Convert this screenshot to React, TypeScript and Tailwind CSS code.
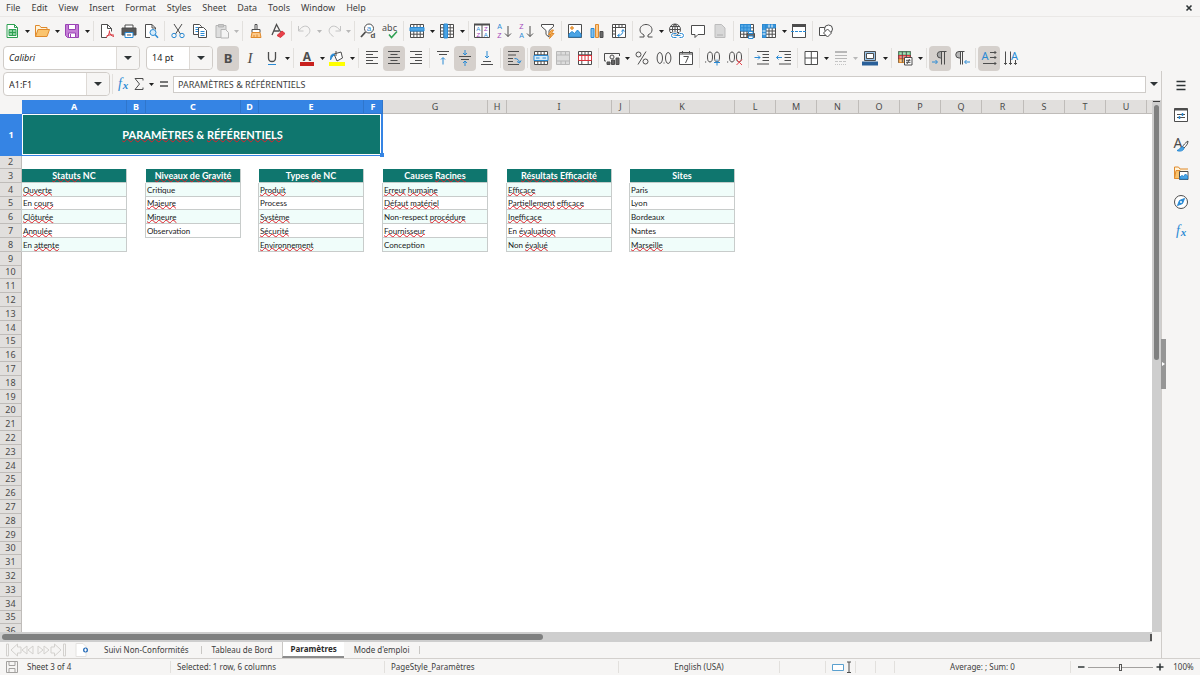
import type { ReactNode } from 'react'

type IconProps = { children: ReactNode }

const Icon = ({ children }: IconProps) => (
  <svg
    viewBox="0 0 16 16"
    className="h-4 w-4 shrink-0 overflow-visible"
    fill="none"
    stroke="#4d4d4d"
    strokeWidth="1"
    aria-hidden="true"
  >
    {children}
  </svg>
)

type GlyphProps = {
  x: number
  y: number
  size: number
  fill?: string
  serif?: boolean
  bold?: boolean
  italic?: boolean
  children: string
}

const Glyph = ({ x, y, size, fill = '#4d4d4d', serif, bold, italic, children }: GlyphProps) => {
  const sans = size < 9 ? 'Liberation Sans, sans-serif' : 'Noto Sans, sans-serif'
  return (
    <text
      x={x}
      y={y}
      fontSize={size}
      fill={fill}
      stroke="none"
      textAnchor="middle"
      fontFamily={serif ? 'Liberation Serif, serif' : sans}
      fontWeight={bold ? 700 : 400}
      fontStyle={italic ? 'italic' : 'normal'}
    >
      {children}
    </text>
  )
}

const BLUE = '#2a8ad4'
const PURPLE = '#a244b8'
const GRID = 'M1.5 1.5h13v13h-13z M1.5 4.8h13 M1.5 8h13 M1.5 11.2h13 M4.8 1.5v13 M8 1.5v13 M11.2 1.5v13'

const icons = {
  newDoc: (
    <Icon>
      <path d="M3 1.5h7.5l3 3v10H3z" fill="#fff" stroke="#2ea052" />
      <path d="M10.5 1.5v3h3" stroke="#2ea052" />
      <path d="M5 6.5h7v6H5z" fill="#8fd6a5" stroke="#2ea052" />
      <path d="M5 9.5h7M8.5 6.5v6" stroke="#2ea052" />
    </Icon>
  ),
  open: (
    <Icon>
      <path d="M1.5 13.5v-11h4l1.5 2h6v2" fill="#fff3d9" stroke="#e08a2c" />
      <path d="M1.5 13.5l2.5-7h11.5l-2.5 7z" fill="#fac46f" stroke="#e08a2c" />
    </Icon>
  ),
  save: (
    <Icon>
      <path d="M1.5 1.5h13v13h-11l-2-2z" fill="#c57fd6" stroke="#9a42b5" />
      <path d="M4.5 1.5h7v5h-7z" fill="#fff" stroke="#9a42b5" />
      <path d="M4.5 10h7v4.5h-7z" fill="#fff" stroke="#9a42b5" />
      <path d="M6.5 11v3" stroke="#9a42b5" />
    </Icon>
  ),
  pdf: (
    <Icon>
      <path d="M8 14.5H2.5v-13h6l4 4v3" fill="#fff" />
      <path d="M8.5 1.5v4h4" />
      <path d="M7 14.5c2-1 3.5-4 3.5-7M10.5 9c.5 2.5 2 4 4.5 4.5M7.5 13c2-1.2 5-1.5 7.5-.8" stroke="#d9343d" />
    </Icon>
  ),
  print: (
    <Icon>
      <path d="M4 5V2h8v3" fill="#fff" />
      <path d="M1 5h14v7H1z" fill="#595959" />
      <path d="M4 9.500h8v5H4z" fill="#fff" stroke={BLUE} />
      <path d="M6 12h4" />
    </Icon>
  ),
  preview: (
    <Icon>
      <path d="M7 14.5H2.5v-13H9L12.500 5v1.500" fill="#fff" />
      <path d="M9 1.5V5h3.5" />
      <circle cx="10" cy="9.5" r="3" fill="#d7ecfa" stroke={BLUE} />
      <path d="M12.2 11.7l2.8 3" stroke={BLUE} strokeWidth="1.5" />
    </Icon>
  ),
  cut: (
    <Icon>
      <path d="M4 1l6.5 10M12 1L5.5 11" />
      <circle cx="4" cy="12.5" r="2.2" stroke={BLUE} />
      <circle cx="12" cy="12.5" r="2.2" stroke={BLUE} />
    </Icon>
  ),
  copy: (
    <Icon>
      <path d="M1.5 1.5h6l2 2v8h-8z" fill="#fff" />
      <path d="M3.5 4.5h3M3.5 6.5h3M3.5 8.5h3" stroke={BLUE} />
      <path d="M6.5 4.5h5l3 3v7h-8z" fill="#fff" />
      <path d="M8.5 8.5h4M8.5 10.5h4M8.5 12.5h4" stroke={BLUE} />
    </Icon>
  ),
  paste: (
    <Icon>
      <path d="M2 2.5h10v12H2z" fill="#dedede" stroke="#b5b5b5" />
      <path d="M4.5 1.5h5V4h-5z" fill="#c8c8c8" stroke="#b5b5b5" />
      <path d="M7 6.5h4.5l3 3V15H7z" fill="#f4f4f4" stroke="#b5b5b5" />
    </Icon>
  ),
  clone: (
    <Icon>
      <path d="M7 1.5h2v5H7z" fill="#fff" />
      <path d="M4 6.5h8v3H4z" fill="#fff" />
      <path d="M4 9.5h8l1 5H3z" fill="#fcc98a" stroke="#e08a2c" />
      <path d="M6 12v2.5M9 11.5v3" stroke="#e08a2c" />
    </Icon>
  ),
  clear: (
    <Icon>
      <path d="M2 12L6.500 1.500L10.500 9M4 8h5" strokeWidth="1.3" />
      <path d="M7 12.5l5-4.500 3 2.500-4.500 4z" fill="#e8414a" stroke="#d9343d" />
    </Icon>
  ),
  undo: (
    <Icon>
      <path d="M1.5 3v5h5M2 7.5c3-5 8-5.500 10-2.500s.5 6-3.500 8.500" stroke="#c4c4c4" />
    </Icon>
  ),
  redo: (
    <Icon>
      <path d="M14.5 3v5h-5M14 7.5C11 2.500 6 2 4 5s-.5 6 3.500 8.500" stroke="#c4c4c4" />
    </Icon>
  ),
  find: (
    <Icon>
      <circle cx="9" cy="5.5" r="4.5" fill="#fff" />
      <path d="M5.5 9L1 14" strokeWidth="1.8" />
      <Glyph x={9} y={8} size={8} fill={BLUE}>a</Glyph>
      <Glyph x={13} y={15} size={8} bold>d</Glyph>
    </Icon>
  ),
  spelling: (
    <Icon>
      <Glyph x={7.5} y={8} size={9}>abc</Glyph>
      <path d="M7 11.5l2.500 3L15 8.5" stroke="#2ea052" strokeWidth="1.5" />
    </Icon>
  ),
  row: (
    <Icon>
      <path d={GRID} fill="#fff" />
      <path d="M1 4.5h14V8H1z" fill="#4ba4e4" stroke={BLUE} />
    </Icon>
  ),
  column: (
    <Icon>
      <path d={GRID} fill="#fff" />
      <path d="M5 1h3.500v14H5z" fill="#4ba4e4" stroke={BLUE} />
    </Icon>
  ),
  sort: (
    <Icon>
      <path d="M.5 1.5h15v13H.5zM8 2v12.500" fill="#fff" />
      <path d="M0 1.5h16" strokeWidth="2" />
      <Glyph x={4.3} y={7.5} size={6} fill={BLUE}>A</Glyph>
      <Glyph x={4.3} y={14.2} size={6} fill={PURPLE}>Z</Glyph>
      <Glyph x={11.8} y={7.5} size={6} fill={PURPLE}>Z</Glyph>
      <Glyph x={11.8} y={14.2} size={6} fill={BLUE}>A</Glyph>
    </Icon>
  ),
  sortAsc: (
    <Icon>
      <Glyph x={3.5} y={6} size={7} fill={BLUE}>A</Glyph>
      <Glyph x={3.5} y={15} size={7} fill={PURPLE}>Z</Glyph>
      <path d="M12 3v10.500M9 10.500l3 3 3-3" />
    </Icon>
  ),
  sortDesc: (
    <Icon>
      <Glyph x={3.5} y={6} size={7} fill={PURPLE}>Z</Glyph>
      <Glyph x={3.5} y={15} size={7} fill={BLUE}>A</Glyph>
      <path d="M12 3v10.500M9 10.500l3 3 3-3" />
    </Icon>
  ),
  filter: (
    <Icon>
      <path d="M1.5 1.5h12v2L9 7.5V14l-3-2.500v-4l-4.500-4z" fill="#fff" />
      <path d="M11.5 7l-3 4.500H11l-1.500 4 4.500-5h-2.500l2-3.500z" fill="#f7b25c" stroke="#e08a2c" />
    </Icon>
  ),
  image: (
    <Icon>
      <path d="M1.5 1.5h13v13h-13z" fill="#fff" />
      <path d="M2 14v-3l3-2.500 2.500 2 3-3.500L14 11v3z" fill="#4ba4e4" stroke={BLUE} />
      <circle cx="5" cy="5" r="1.3" fill="#f7b25c" stroke="#e08a2c" />
    </Icon>
  ),
  chart: (
    <Icon>
      <path d="M2 5.5h3v9H2z" fill="#7ebfee" stroke={BLUE} />
      <path d="M6.5 1.5h3v13h-3z" fill="#fcc98a" stroke="#e08a2c" />
      <path d="M11 8.5h3v6h-3z" fill="#6b6b6b" />
    </Icon>
  ),
  pivot: (
    <Icon>
      <path d="M1.5 1.5h13v13h-13z" fill="#fff" />
      <path d="M1.5 4.5h13M4.5 1.5v13M8 1.5v3M11 1.5v3M1.5 8h3M1.5 11h3" />
      <path d="M7 12.5c3.500 0 5-2 5-5.500M10.500 8.500l1.500-2 1.500 2M8.500 11l-2 1.500 2 1.500" stroke={BLUE} />
    </Icon>
  ),
  omega: (
    <Icon>
      <path d="M1.5 14H6v-2C3 10.500 2 8.800 2 6.800 2 3.800 4.500 1.500 8 1.500s6 2.300 6 5.300c0 2-1 3.700-4 5.200v2h4.500" />
    </Icon>
  ),
  link: (
    <Icon>
      <circle cx="7" cy="6.5" r="5.5" fill="#fff" />
      <path d="M1.5 6.5h11M7 1v11M2.500 3.500h9M2.500 9.500h9M7 1c-3.500 3-3.500 8 0 11M7 1c3.500 3 3.500 8 0 11" />
      <path d="M9 10.500H5.500a2 2 0 000 4H9M11 10.500h2.500a2 2 0 010 4H11" stroke="#fff" strokeWidth="2.500" />
      <path d="M8.500 10.500h-3a2 2 0 000 4h3M11.500 10.500h2a2 2 0 010 4h-2M7.500 12.500h5" stroke={BLUE} />
    </Icon>
  ),
  comment: (
    <Icon>
      <path d="M1.5 2.500h13v9H8l-3 3v-3H1.500z" fill="#fff" />
    </Icon>
  ),
  headerFooter: (
    <Icon>
      <path d="M3 1.5h6.500L13 5v9.500H3z" fill="#d8d8d8" stroke="#bcbcbc" />
      <path d="M5 11h6v2H5z" fill="#c4c4c4" stroke="none" />
    </Icon>
  ),
  printArea: (
    <Icon>
      <path d={GRID} fill="#fff" />
      <path d="M1.5 1.5h10V8h-10z" fill="#58aae6" stroke={BLUE} />
      <path d="M1.5 4.8h10M4.8 1.5V8M8 1.5V8" stroke={BLUE} />
      <path d="M8 10.500h7.500v4H8z" fill="#666" />
      <path d="M9.500 8.500H14v2H9.500zM9.500 13H14v2.500H9.500z" fill="#fff" stroke={BLUE} />
    </Icon>
  ),
  freeze: (
    <Icon>
      <path d={GRID} fill="#fff" />
      <path d="M1.5 1.5h3.300v13H1.500zM4.800 1.500h9.700v3.300H4.800z" fill="#3b97dc" stroke={BLUE} />
      <path d="M1.5 8h3M1.5 11h3M8 1.500v3M11 1.500v3" stroke="#fff" />
    </Icon>
  ),
  split: (
    <Icon>
      <path d="M1.5 1.5h13v13h-13z" fill="#fff" />
      <path d="M1 2.500h14" strokeWidth="3" />
      <path d="M0 8.500h16" stroke={BLUE} strokeDasharray="3 1" />
    </Icon>
  ),
  shapes: (
    <Icon>
      <path d="M1.5 4.500h8v8h-8z" fill="#fff" />
      <circle cx="10.5" cy="6" r="4" fill="#fff" />
      <path d="M9.500 6l4 4-4 4-4-4z" fill="#fff" />
    </Icon>
  ),
  bold: (
    <Icon>
      <Glyph x={8} y={12.5} size={13} bold>B</Glyph>
    </Icon>
  ),
  italic: (
    <Icon>
      <Glyph x={8} y={12.5} size={15} serif italic>I</Glyph>
    </Icon>
  ),
  underline: (
    <Icon>
      <path d="M4.500 2v6c0 2.500 1.300 3.500 3.500 3.500s3.500-1 3.500-3.500V2" strokeWidth="1.3" />
      <path d="M4 14.500h8" stroke={BLUE} />
    </Icon>
  ),
  fontColor: (
    <Icon>
      <Glyph x={8} y={10.5} size={12} bold>A</Glyph>
      <path d="M1 14h14" stroke="#c9211e" strokeWidth="4" />
    </Icon>
  ),
  highlight: (
    <Icon>
      <path d="M5 4l7-2 1.500 6L8 11z" fill="#fff" />
      <path d="M7 1v5" />
      <path d="M5 4C2 4 1.500 6 1.500 10L3 7l3-3" fill={BLUE} stroke={BLUE} />
      <path d="M0 14h16" stroke="#ffff00" strokeWidth="4" />
    </Icon>
  ),
  alignLeft: (
    <Icon>
      <path d="M2 1.500h12M2 4.500h7M2 7.500h12M2 10.500h7M2 13.500h12" />
    </Icon>
  ),
  alignCenter: (
    <Icon>
      <path d="M2 1.500h12M4.500 4.500h7M2 7.500h12M4.500 10.500h7M2 13.500h12" />
    </Icon>
  ),
  alignRight: (
    <Icon>
      <path d="M2 1.500h12M7 4.500h7M2 7.500h12M7 10.500h7M2 13.500h12" />
    </Icon>
  ),
  alignTop: (
    <Icon>
      <path d="M2 1.500h12M4 4.500h8" />
      <path d="M8 14.500V8M6 9.500l2-2 2 2" stroke={BLUE} />
    </Icon>
  ),
  alignMiddle: (
    <Icon>
      <path d="M2 6.500h12M4 9.500h8" />
      <path d="M8 0v4.500M6 3l2 2 2-2M8 16v-4.500M6 13l2-2 2 2" stroke={BLUE} />
    </Icon>
  ),
  alignBottom: (
    <Icon>
      <path d="M4 11.500h8M2 14.500h12" />
      <path d="M8 1v7M6 6l2 2 2-2" stroke={BLUE} />
    </Icon>
  ),
  wrap: (
    <Icon>
      <path d="M2 1.500h11M2 5h8M2 8.500h5M2 11.500h5M2 14.500h11" />
      <path d="M8.500 8.500c3 0 4.500 1.500 5 4M11 11.500l2.500 1.500 1.500-2.500" stroke={BLUE} />
    </Icon>
  ),
  merge: (
    <Icon>
      <path d="M1.5 1.500h13v13h-13zM1.500 4.800h13M1.500 11.200h13M4.800 1.500v13M8 1.500v13M11.200 1.500v13" fill="#fff" />
      <path d="M1 5.500h14v5H1z" fill="#d7ecfa" stroke={BLUE} />
      <path d="M3 8h3.500M13 8H9.500" stroke={BLUE} />
    </Icon>
  ),
  mergeCells: (
    <Icon>
      <path
        d="M1.500 1.500h13v13h-13zM1.500 5h13M1.500 11h13M6 1.500V5M10.500 1.500V5M6 11v3.500M10.500 11v3.500"
        fill="#dcdcdc"
        stroke="#b8b8b8"
      />
    </Icon>
  ),
  unmerge: (
    <Icon>
      <path d="M1.500 1.500h13v13h-13zM1.500 4.800h13M4.800 1.500v3.300M8 1.500v3.300M11.200 1.500v3.300M4.800 10.500v4M11.200 10.500v4" fill="#fff" />
      <path d="M1.500 5.500h13v5h-13zM4.800 5.500v5M8 5.500v5M11.200 5.500v5" stroke="#d9343d" />
    </Icon>
  ),
  currency: (
    <Icon>
      <path d="M2 11H.5V3.500h15V6" />
      <circle cx="8" cy="7" r="2" />
      <path d="M3 12h3v2.500H3zM7.500 10h3v4.500h-3zM12 8h3v6.500h-3z" fill="#666" />
    </Icon>
  ),
  percent: (
    <Icon>
      <circle cx="4.5" cy="4.500" r="2.5" />
      <circle cx="11.5" cy="11.500" r="2.5" />
      <path d="M12 1.500l-8 13" />
    </Icon>
  ),
  number: (
    <Icon>
      <ellipse cx="3.800" cy="8" rx="2.700" ry="5.500" />
      <ellipse cx="12.200" cy="8" rx="2.700" ry="5.500" />
      <path d="M7.500 13h1" />
    </Icon>
  ),
  date: (
    <Icon>
      <path d="M1.500 2.500h13v12h-13zM1.500 4h13M4.500 1v2.500M11.500 1v2.500" fill="#fff" />
      <path d="M5.500 6.500h5l-3 6.500" />
    </Icon>
  ),
  addDecimal: (
    <Icon>
      <ellipse cx="5" cy="7" rx="2.500" ry="5" />
      <ellipse cx="12" cy="7" rx="2.500" ry="5" />
      <path d="M0 12h1.200" />
      <path d="M12 9.500v6M9 12.500h6" stroke={BLUE} />
    </Icon>
  ),
  removeDecimal: (
    <Icon>
      <ellipse cx="5" cy="7" rx="2.500" ry="5" />
      <ellipse cx="12" cy="7" rx="2.500" ry="5" />
      <path d="M0 12h1.200" />
      <path d="M9.500 9.500L15 15M15 9.500L9.500 15" stroke="#e8414a" />
    </Icon>
  ),
  indent: (
    <Icon>
      <path d="M3 1.500h12M8.500 4.500H15M8.500 7.500H15M8.500 10.500H15M3 14h12" />
      <path d="M.5 7.500H6M4 5.500l2 2-2 2" stroke={BLUE} />
    </Icon>
  ),
  outdent: (
    <Icon>
      <path d="M3 1.500h12M8.500 4.500H15M8.500 7.500H15M8.500 10.500H15M3 14h12" />
      <path d="M.5 7.500H6M2.500 5.500l-2 2 2 2" stroke={BLUE} />
    </Icon>
  ),
  borders: (
    <Icon>
      <path d="M2 1.500h12.500v13H2zM8.300 1.500v13M2 8h12.500" fill="#fff" />
    </Icon>
  ),
  borderStyle: (
    <Icon>
      <path d="M2 2h12" strokeWidth="2" stroke="#b8b8b8" />
      <path d="M2 5.500h12M2 8.500h12" stroke="#b8b8b8" />
      <path d="M2 11.500h12" stroke="#c4c4c4" strokeDasharray="3 1" />
      <path d="M2 14.500h12" stroke="#c4c4c4" strokeDasharray="1 1" />
    </Icon>
  ),
  borderColor: (
    <Icon>
      <path d="M2.500 1.500h11v9h-11z" fill="#9dc6ea" />
      <path d="M4.500 3.500h7v5h-7z" fill="#fff" />
      <path d="M0 13.500h16" stroke="#2a6099" strokeWidth="4" />
    </Icon>
  ),
  conditional: (
    <Icon>
      <path d="M1.500 1.500h12v11h-12z" fill="#fff" />
      <path d="M2 2h11v3H2z" fill="#a9dfba" stroke="#5cb578" />
      <path d="M2 5.500h11v3H2z" fill="#f28b82" stroke="#d9343d" />
      <path d="M2 9h5v3.500H2z" fill="#fcc98a" stroke="#e08a2c" />
      <path d="M5.300 1.500v11M9.300 1.500v6" />
      <path d="M7.500 7.500H15V15H7.500z" fill="#fff" />
      <path d="M9 10.300h4.500M9 12.300h4.500M12.500 9L10 14" />
    </Icon>
  ),
  ltr: (
    <Icon>
      <path d="M9.500 1.500h-1a3 3 0 000 6.500h1z" fill="#a8a8a8" />
      <path d="M8.500 1.500h6M9.500 8v6.500M12.500 1.500v13" />
      <path d="M0 12h5M3.500 10l2 2-2 2" stroke={BLUE} />
    </Icon>
  ),
  rtl: (
    <Icon>
      <path d="M6.500 1.500H5A3 3 0 005 8h1.500z" fill="#b8b8b8" />
      <path d="M5 1.500h5.500M6.500 8v6.500M8.500 1.500v13" />
      <path d="M16 12h-5M12.500 10l-2 2 2 2" stroke={BLUE} />
    </Icon>
  ),
  textLtr: (
    <Icon>
      <Glyph x={4} y={9.5} size={11} fill={BLUE}>A</Glyph>
      <path d="M9 2.500h6M9 7.500h6M2 13.500h13M13.500 1L15 2.500 13.500 4M13.500 6L15 7.500 13.500 9M13.500 12l1.500 1.500-1.500 1.500" />
    </Icon>
  ),
  textTtb: (
    <Icon>
      <Glyph x={11.5} y={9.5} size={11} fill={BLUE}>A</Glyph>
      <path d="M2.500 1.500v13M7.500 1.500v13M12.500 10v4.500M1 13l1.500 1.500L4 13M6 13l1.500 1.500L9 13M11 13l1.500 1.500L14 13" />
    </Icon>
  ),
  functionWizard: (
    <Icon>
      <Glyph x={5} y={11.5} size={14} fill={BLUE} serif italic>f</Glyph>
      <Glyph x={10.5} y={13} size={11} fill={BLUE} serif italic bold>x</Glyph>
    </Icon>
  ),
  sum: (
    <Icon>
      <path d="M12 4.500V2.500H4L8.500 8 4 13.500h8v-2" />
    </Icon>
  ),
  equals: (
    <Icon>
      <path d="M4 6h8M4 10h8" strokeWidth="1.5" />
    </Icon>
  ),
  menu: (
    <Icon>
      <path d="M3.500 3.500h9M3.500 7.500h9M3.500 11.500h9" stroke="#2e3436" strokeWidth="1.3" />
    </Icon>
  ),
  properties: (
    <Icon>
      <path d="M1.500 1.500h13v13h-13z" fill="#fff" />
      <path d="M1.500 2.500h13" strokeWidth="2" />
      <path d="M4 7.500h8M4 10.500h8" />
      <path d="M9.500 6v3M6.500 9v3" stroke={BLUE} strokeWidth="1.5" />
    </Icon>
  ),
  styles: (
    <Icon>
      <Glyph x={5} y={11.5} size={14}>A</Glyph>
      <path d="M15 5c-3 2-4.500 4-5.500 6L11 12c2-2 4-4 4-7z" fill="#fff" />
      <path d="M9.500 11c-3 0-2.500 3-5.500 3.500 3 1.500 7 0 7-2.500z" fill="#4ba4e4" stroke={BLUE} />
    </Icon>
  ),
  gallery: (
    <Icon>
      <path d="M1.500 13.500V2h4L7 4h8" fill="#fff3d9" stroke="#e08a2c" />
      <path d="M1.500 13.500l1.500-8h4v8z" fill="#fac46f" stroke="#e08a2c" />
      <path d="M6.500 6.500H15v8H6.500z" fill="#fff" />
      <path d="M7 14v-2l2-1.500 1.500 1L12.500 9l2 2v3z" fill="#4ba4e4" stroke={BLUE} />
    </Icon>
  ),
  navigator: (
    <Icon>
      <circle cx="8" cy="8" r="6.500" fill="#fff" />
      <path d="M11.500 4.500l-5 2-2 5 5-2z" fill={BLUE} stroke={BLUE} />
      <circle cx="8" cy="8" r="1" fill="#fff" stroke="none" />
    </Icon>
  ),
}

type IconName = keyof typeof icons

type Tool = {
  icon: IconName
  label: string
  caret?: boolean
  active?: boolean
  disabled?: boolean
}

type ToolGroup = Tool[]

const standardTools: ToolGroup[] = [
  [
    { icon: 'newDoc', label: 'New', caret: true },
    { icon: 'open', label: 'Open', caret: true },
    { icon: 'save', label: 'Save', caret: true },
  ],
  [
    { icon: 'pdf', label: 'Export as PDF' },
    { icon: 'print', label: 'Print' },
    { icon: 'preview', label: 'Print Preview' },
  ],
  [
    { icon: 'cut', label: 'Cut' },
    { icon: 'copy', label: 'Copy' },
    { icon: 'paste', label: 'Paste', caret: true, disabled: true },
  ],
  [
    { icon: 'clone', label: 'Clone Formatting' },
    { icon: 'clear', label: 'Clear Direct Formatting' },
  ],
  [
    { icon: 'undo', label: 'Undo', caret: true, disabled: true },
    { icon: 'redo', label: 'Redo', caret: true, disabled: true },
  ],
  [
    { icon: 'find', label: 'Find and Replace' },
    { icon: 'spelling', label: 'Spelling' },
  ],
  [
    { icon: 'row', label: 'Row', caret: true },
    { icon: 'column', label: 'Column', caret: true },
  ],
  [
    { icon: 'sort', label: 'Sort' },
    { icon: 'sortAsc', label: 'Sort Ascending' },
    { icon: 'sortDesc', label: 'Sort Descending' },
    { icon: 'filter', label: 'AutoFilter' },
  ],
  [
    { icon: 'image', label: 'Insert Image' },
    { icon: 'chart', label: 'Insert Chart' },
    { icon: 'pivot', label: 'Pivot Table' },
  ],
  [
    { icon: 'omega', label: 'Special Character', caret: true },
    { icon: 'link', label: 'Hyperlink' },
    { icon: 'comment', label: 'Comment' },
    { icon: 'headerFooter', label: 'Headers and Footers', disabled: true },
  ],
  [
    { icon: 'printArea', label: 'Define Print Area' },
    { icon: 'freeze', label: 'Freeze Rows and Columns', caret: true },
    { icon: 'split', label: 'Split Window' },
  ],
  [{ icon: 'shapes', label: 'Draw Functions' }],
]

const formatTools: ToolGroup[] = [
  [
    { icon: 'bold', label: 'Bold', active: true },
    { icon: 'italic', label: 'Italic' },
    { icon: 'underline', label: 'Underline', caret: true },
  ],
  [
    { icon: 'fontColor', label: 'Font Color', caret: true },
    { icon: 'highlight', label: 'Background Color', caret: true },
  ],
  [
    { icon: 'alignLeft', label: 'Align Left' },
    { icon: 'alignCenter', label: 'Center Horizontally', active: true },
    { icon: 'alignRight', label: 'Align Right' },
  ],
  [
    { icon: 'alignTop', label: 'Align Top' },
    { icon: 'alignMiddle', label: 'Center Vertically', active: true },
    { icon: 'alignBottom', label: 'Align Bottom' },
  ],
  [{ icon: 'wrap', label: 'Wrap Text', active: true }],
  [
    { icon: 'merge', label: 'Merge and Center Cells', active: true },
    { icon: 'mergeCells', label: 'Merge Cells', disabled: true },
    { icon: 'unmerge', label: 'Unmerge Cells' },
  ],
  [
    { icon: 'currency', label: 'Format as Currency', caret: true },
    { icon: 'percent', label: 'Format as Percent' },
    { icon: 'number', label: 'Format as Number' },
    { icon: 'date', label: 'Format as Date' },
  ],
  [
    { icon: 'addDecimal', label: 'Add Decimal Place' },
    { icon: 'removeDecimal', label: 'Delete Decimal Place' },
  ],
  [
    { icon: 'indent', label: 'Increase Indent' },
    { icon: 'outdent', label: 'Decrease Indent' },
  ],
  [
    { icon: 'borders', label: 'Borders', caret: true },
    { icon: 'borderStyle', label: 'Border Style', caret: true, disabled: true },
    { icon: 'borderColor', label: 'Border Color', caret: true },
  ],
  [{ icon: 'conditional', label: 'Conditional', caret: true }],
  [
    { icon: 'ltr', label: 'Left-To-Right', active: true },
    { icon: 'rtl', label: 'Right-To-Left' },
  ],
  [
    { icon: 'textLtr', label: 'Text from left to right', active: true },
    { icon: 'textTtb', label: 'Text from top to bottom' },
  ],
]

const sidebarTools: Tool[] = [
  { icon: 'menu', label: 'Sidebar Settings' },
  { icon: 'properties', label: 'Properties' },
  { icon: 'styles', label: 'Styles' },
  { icon: 'gallery', label: 'Gallery' },
  { icon: 'navigator', label: 'Navigator' },
  { icon: 'functionWizard', label: 'Functions' },
]

const menus = ['File', 'Edit', 'View', 'Insert', 'Format', 'Styles', 'Sheet', 'Data', 'Tools', 'Window', 'Help']

const columns = [
  { name: 'A', width: 105 },
  { name: 'B', width: 19 },
  { name: 'C', width: 95 },
  { name: 'D', width: 18 },
  { name: 'E', width: 105 },
  { name: 'F', width: 19 },
  { name: 'G', width: 105 },
  { name: 'H', width: 19 },
  { name: 'I', width: 105 },
  { name: 'J', width: 18 },
  { name: 'K', width: 105 },
  { name: 'L', width: 41 },
  { name: 'M', width: 41 },
  { name: 'N', width: 42 },
  { name: 'O', width: 41 },
  { name: 'P', width: 41 },
  { name: 'Q', width: 41 },
  { name: 'R', width: 42 },
  { name: 'S', width: 41 },
  { name: 'T', width: 41 },
  { name: 'U', width: 41 },
]

// Words between underscores are flagged by the spell checker.
const lists: Record<string, string[]> = {
  A: ['_Statuts_ NC', '_Ouverte_', 'En _cours_', '_Clôturée_', '_Annulée_', 'En _attente_'],
  C: ['_Niveaux_ _de_ _Gravité_', 'Critique', '_Majeure_', '_Mineure_', 'Observation'],
  E: ['Types _de_ NC', '_Produit_', 'Process', '_Système_', '_Sécurité_', '_Environnement_'],
  G: ['Causes _Racines_', '_Erreur_ _humaine_', '_Défaut_ _matériel_', 'Non-respect _procédure_', '_Fournisseur_', 'Conception'],
  I: ['_Résultats_ _Efficacité_', '_Efficace_', '_Partiellement_ _efficace_', '_Inefficace_', 'En _évaluation_', 'Non _évalué_'],
  K: ['Sites', 'Paris', 'Lyon', 'Bordeaux', 'Nantes', '_Marseille_'],
}

const FIRST_LIST_ROW = 3
const rows = Array.from({ length: 35 }, (_, i) => i + 2)

const Caret = ({ disabled }: { disabled?: boolean }) => (
  <svg viewBox="0 0 5 3" className="h-[3px] w-[5px]" aria-hidden="true">
    <path d="M0 0h5L2.500 3z" fill={disabled ? '#b8b8b8' : '#1f1f1f'} />
  </svg>
)

const BigCaret = () => (
  <svg viewBox="0 0 8 4" className="h-1 w-2" aria-hidden="true">
    <path d="M0 0h8L4 4z" fill="#2e3436" />
  </svg>
)

const Separator = () => <span className="mx-[2px] h-5 w-px shrink-0 bg-[#e2e0dd]" />

const ToolButton = ({ icon, label, caret, active, disabled }: Tool) => (
  <div className="flex shrink-0 items-center">
    <button
      type="button"
      title={label}
      aria-label={label}
      disabled={disabled}
      className={`flex h-[25px] w-[22px] items-center justify-center rounded ${active ? 'bg-[#d5d0cc]' : ''}`}
    >
      {icons[icon]}
    </button>
    {caret ? (
      <button
        type="button"
        aria-label={`${label} options`}
        disabled={disabled}
        className={`flex h-[25px] items-center justify-center ${disabled ? 'w-[7px]' : 'w-2'}`}
      >
        <Caret disabled={disabled} />
      </button>
    ) : null}
  </div>
)

const ToolGroups = ({ groups }: { groups: ToolGroup[] }) => (
  <>
    {groups.map((group, i) => (
      <div key={group[0].icon} className="flex items-center">
        {i > 0 ? <Separator /> : null}
        {group.map((tool) => (
          <ToolButton key={tool.icon} {...tool} />
        ))}
      </div>
    ))}
  </>
)

type DropdownProps = {
  label: string
  value: string
  className: string
  textClassName?: string
}

const Dropdown = ({ label, value, className, textClassName = '' }: DropdownProps) => (
  <div className={`relative flex h-6 items-center rounded border border-[#d0ccc8] bg-white ${className}`}>
    <select
      aria-label={label}
      defaultValue={value}
      className={`h-full w-full appearance-none bg-transparent pl-[5px] text-[#1f1f1f] outline-none ${textClassName}`}
    >
      <option>{value}</option>
    </select>
    <span className="pointer-events-none absolute inset-y-0 right-0 flex w-[23px] items-center justify-center rounded-r border-l border-[#dedad6] bg-[#f6f5f4]">
      <BigCaret />
    </span>
  </div>
)

const SpellText = ({ text }: { text: string }) => (
  <>
    {text.split('_').map((part, i) =>
      i % 2 === 1 && part.trim() ? (
        <span
          key={i}
          className="underline decoration-[#e0202a] decoration-wavy decoration-1 underline-offset-[-1px] [text-decoration-skip-ink:none]"
        >
          {part}
        </span>
      ) : (
        part
      ),
    )}
  </>
)

const SheetCell = ({ column, row }: { column: string; row: number }) => {
  const index = row - FIRST_LIST_ROW
  const text = lists[column]?.[index]
  if (!text) return <td className="p-0" />
  if (index === 0) {
    return (
      <td className="border-r border-b border-[#c3ccca] bg-[#0f766e] p-0 text-center text-[9px] font-bold whitespace-nowrap text-white">
        <SpellText text={text} />
      </td>
    )
  }
  return (
    <td
      className={`border-r border-b border-[#c8cccb] p-0 pl-px whitespace-nowrap shadow-[-1px_0_0_#c8cccb] ${index % 2 === 1 ? 'bg-[#f0fdfa]' : 'bg-white'}`}
    >
      <SpellText text={text} />
    </td>
  )
}

const Sheet = () => (
  <table className="w-full table-fixed border-separate border-spacing-0 font-['Lato',sans-serif] text-[8px] leading-[12px] text-[#1a1a1a]">
    <colgroup>
      <col style={{ width: 22 }} />
      {columns.map((column) => (
        <col key={column.name} style={{ width: column.width }} />
      ))}
      <col />
    </colgroup>
    <thead className="font-['Noto_Sans',sans-serif] text-[9px] text-[#4a4a4a]">
      <tr className="h-[14px]">
        <th className="bg-[#f6f5f4] p-0" />
        {columns.map((column, i) => (
          <th
            key={column.name}
            scope="col"
            className={`border-r border-b p-0 ${
              i < 6
                ? 'border-[#2f76cc] bg-[#3584e4] font-bold text-white'
                : 'border-[#bfbcb9] bg-[#e1dfdd] font-normal'
            }`}
          >
            {column.name}
          </th>
        ))}
        <th className="border-b border-[#bfbcb9] bg-[#e1dfdd] p-0" />
      </tr>
    </thead>
    <tbody>
      <tr className="h-[42px]">
        <th scope="row" className="bg-[#3584e4] p-0 font-['Noto_Sans',sans-serif] text-[9px] text-white">
          1
        </th>
        <td colSpan={6} className="relative bg-[#0f766e] p-0 text-center text-[11px] font-bold text-white">
          <SpellText text="_PARAMÈTRES_ & _RÉFÉRENTIELS_" />
          <span className="absolute inset-0 border-r-2 border-b border-[#3584e4]">
            <span className="absolute inset-0 border border-white" />
          </span>
          <span className="absolute -right-px -bottom-px h-1 w-1 bg-[#3584e4]" />
        </td>
      </tr>
      {rows.map((row) => (
        <tr key={row} className={row === 2 || row % 5 === 0 ? 'h-[13px]' : 'h-[14px]'}>
          <th
            scope="row"
            className="border-r border-b border-[#bfbcb9] bg-[#e1dfdd] p-0 font-['Noto_Sans',sans-serif] text-[9px] font-normal text-[#4a4a4a]"
          >
            {row}
          </th>
          {columns.map((column) => (
            <SheetCell key={column.name} column={column.name} row={row} />
          ))}
          <td className="p-0" />
        </tr>
      ))}
    </tbody>
  </table>
)

const FormulaBar = () => (
  <div className="flex h-[29px] shrink-0 items-start pt-px pl-[3px]">
    <div className="flex h-6 w-[107px] shrink-0 items-center rounded border border-[#d0ccc8] bg-white">
      <input
        aria-label="Name Box"
        defaultValue="A1:F1"
        className="h-full min-w-0 flex-1 pl-[5px] text-[#1f1f1f] outline-none"
      />
      <button
        type="button"
        aria-label="Named ranges"
        className="flex h-full w-[23px] items-center justify-center rounded-r border-l border-[#dedad6] bg-[#f6f5f4]"
      >
        <BigCaret />
      </button>
    </div>
    <div className="flex h-6 items-center">
      <Separator />
      <button type="button" aria-label="Function Wizard" className="flex w-4 justify-center">
        {icons.functionWizard}
      </button>
      <button type="button" aria-label="Select Function" className="flex w-4 justify-center">
        {icons.sum}
      </button>
      <button type="button" aria-label="Select Function options" className="flex w-2 justify-center">
        <Caret />
      </button>
      <button type="button" aria-label="Formula" className="flex w-[18px] justify-center">
        {icons.equals}
      </button>
    </div>
    <input
      aria-label="Formula input"
      defaultValue="PARAMÈTRES & RÉFÉRENTIELS"
      className="mt-1 h-[17px] min-w-0 flex-1 border border-[#cfccc9] bg-white pl-1 outline-none"
    />
    <button type="button" aria-label="Expand Formula Bar" className="flex h-6 w-[15px] items-center justify-center">
      <BigCaret />
    </button>
  </div>
)

const SheetTabs = () => (
  <nav className="flex h-4 shrink-0 items-center text-[8px]" aria-label="Sheets">
    <svg viewBox="0 0 62 14" className="ml-[5px] h-[14px] w-[62px]" fill="none" stroke="#d3d1ce" aria-hidden="true">
      <path d="M1.5 1v12h2V1zM12.500 1L6 7l6.500 6v-3H16V4h-3.500z" />
      <path d="M22 3l-5 4 5 4zM28 3l-5 4 5 4zM33 3l5 4-5 4zM39 3l5 4-5 4z" />
      <path d="M49.500 1L56 7l-6.500 6v-3H46V4h3.500zM58.500 1v12h2V1z" />
    </svg>
    <button type="button" aria-label="Add Sheet" className="ml-[7px] flex w-[15px] justify-center">
      <svg viewBox="0 0 14 14" className="h-[14px] w-[14px]" fill="none" aria-hidden="true">
        <path d="M1 .5h7l3 3v10H1z" fill="#fff" stroke="#e4e2e0" />
        <circle cx="10.5" cy="7" r="2.500" fill="#2a6fba" />
        <path d="M9 7h3M10.500 5.500v3" stroke="#fff" />
      </svg>
    </button>
    <div className="ml-[3px] flex h-full items-center">
      <button type="button" className="h-full px-3">Suivi Non-Conformités</button>
      <span className="h-2 w-px bg-[#c9c7c4]" />
      <button type="button" className="h-full px-[10px]">Tableau de Bord</button>
      <button
        type="button"
        aria-current="page"
        className="h-full border-b-2 border-l border-b-[#8c8c8c] border-l-[#c9c7c4] bg-white px-[7px] font-bold text-[#2b2b2b]"
      >
        Paramètres
      </button>
      <button type="button" className="h-full px-[10px]">Mode d'emploi</button>
      <span className="h-2 w-px bg-[#c9c7c4]" />
    </div>
  </nav>
)

const StatusBar = () => (
  <footer className="flex h-[17px] shrink-0 items-center border-t border-[#d3d0cd] text-[8px]">
    <div className="flex w-[170px] items-center gap-[9px] pl-[6px]">
      <svg viewBox="0 0 12 12" className="h-3 w-3" fill="none" stroke="#a3a19f" aria-hidden="true">
        <path d="M.5.500h11v11H.5zM3 .5v4h6v-4M3 11.500v-4h6v4" />
      </svg>
      <span>Sheet 3 of 4</span>
    </div>
    <span className="w-[214px] border-l border-[#e2e0dd] pl-[6px]">Selected: 1 row, 6 columns</span>
    <span className="w-[234px] border-l border-[#e2e0dd] pl-[6px]">PageStyle_Paramètres</span>
    <span className="flex-1 border-l border-[#e2e0dd] text-center">English (USA)</span>
    <span className="h-3 w-[46px] border-l border-[#e2e0dd]" />
    <span className="flex w-[30px] items-center border-l border-[#e2e0dd] pl-[6px]">
      <svg viewBox="0 0 20 12" className="h-3 w-5" fill="none" aria-hidden="true">
        <path d="M.5 3.500h11v6H.5z" fill="#fff" stroke="#5aa0cf" />
        <path d="M15 1h4M15 11.500h4M17 1v10.500" stroke="#4d4d4d" />
      </svg>
    </span>
    <span className="h-3 w-5 border-l border-[#e2e0dd]" />
    <span className="h-3 w-5 border-x border-[#e2e0dd]" />
    <span className="w-[176px] border-r border-[#e2e0dd] text-center">Average: ; Sum: 0</span>
    <div className="flex w-[96px] items-center gap-[3px] pl-[6px]">
      <button type="button" aria-label="Zoom out">
        <svg viewBox="0 0 8 8" className="h-2 w-2" aria-hidden="true">
          <path d="M1 4h6.500" stroke="#2e3436" strokeWidth="1.5" />
        </svg>
      </button>
      <input
        type="range"
        aria-label="Zoom"
        defaultValue={50}
        className="h-3 w-[65px] appearance-none bg-[linear-gradient(#a3a19f,#a3a19f)] bg-[length:100%_1px] bg-center bg-no-repeat [&::-webkit-slider-thumb]:h-[7px] [&::-webkit-slider-thumb]:w-[3px] [&::-webkit-slider-thumb]:appearance-none [&::-webkit-slider-thumb]:border [&::-webkit-slider-thumb]:border-[#555] [&::-webkit-slider-thumb]:bg-[#f6f5f4]"
      />
      <button type="button" aria-label="Zoom in">
        <svg viewBox="0 0 8 8" className="h-2 w-2" aria-hidden="true">
          <path d="M.5 4h7M4 .5v7" stroke="#2e3436" strokeWidth="1.5" />
        </svg>
      </button>
    </div>
    <span className="w-[33px] text-center">100%</span>
  </footer>
)

export default function App() {
  return (
    <div className="flex h-screen flex-col overflow-hidden bg-[#f6f5f4] font-['Noto_Sans',sans-serif] text-[9px] text-[#3d3d3d]">
      <header className="shrink-0">
        <nav className="flex h-[17px] items-center gap-[11px] border-b border-[#eae8e6] pl-[6px]" aria-label="Menu bar">
          {menus.map((menu) => (
            <button key={menu} type="button">
              {menu}
            </button>
          ))}
          <button type="button" aria-label="Close document" className="mr-[7px] ml-auto">
            <svg viewBox="0 0 8 8" className="h-2 w-2" aria-hidden="true">
              <path d="M1.5 1.5l5 5M6.500 1.500l-5 5" stroke="#2e3436" strokeWidth="1.6" />
            </svg>
          </button>
        </nav>
        <div className="flex h-7 items-center pl-px">
          <ToolGroups groups={standardTools} />
        </div>
        <div className="flex h-[26px] items-center pl-[3px]">
          <Dropdown label="Font Name" value="Calibri" className="mr-[6px] w-[137px]" textClassName="italic" />
          <Dropdown label="Font Size" value="14 pt" className="mr-1 w-[67px]" />
          <ToolGroups groups={formatTools} />
        </div>
      </header>
      <div className="flex min-h-0 flex-1">
        <div className="flex min-w-0 flex-1 flex-col">
          <FormulaBar />
          <main className="flex min-h-0 flex-1">
            <div className="min-w-0 flex-1 overflow-hidden bg-white">
              <Sheet />
            </div>
            <div className="flex w-[9px] shrink-0 flex-col items-center bg-[#cecece] pt-px">
              <div className="h-px w-[7px] bg-[#3d3d3d]" />
              <div className="mt-[3px] h-[48%] w-[5px] rounded-full bg-[#7f8080]" />
            </div>
          </main>
          <div className="mr-[9px] flex h-[10px] shrink-0 items-center bg-[#cecece] pl-[2px]">
            <div className="h-[6px] w-[47%] rounded-full bg-[#7f8080]" />
            <div className="ml-auto h-[7px] w-[2px] bg-[#555]" />
          </div>
          <SheetTabs />
        </div>
        <aside className="relative flex w-[39px] shrink-0 flex-col items-center gap-[13px] border-l border-[#cfccc9] pt-[7px]">
          {sidebarTools.map((tool) => (
            <button key={tool.icon} type="button" title={tool.label} aria-label={tool.label}>
              {icons[tool.icon]}
            </button>
          ))}
          <button
            type="button"
            aria-label="Hide sidebar"
            className="absolute top-[268px] -left-px flex h-[50px] w-[5px] items-center justify-center bg-[#969696]"
          >
            <svg viewBox="0 0 3 4" className="h-1 w-[3px]" aria-hidden="true">
              <path d="M0 0l3 2-3 2z" fill="#fff" />
            </svg>
          </button>
        </aside>
      </div>
      <StatusBar />
    </div>
  )
}
